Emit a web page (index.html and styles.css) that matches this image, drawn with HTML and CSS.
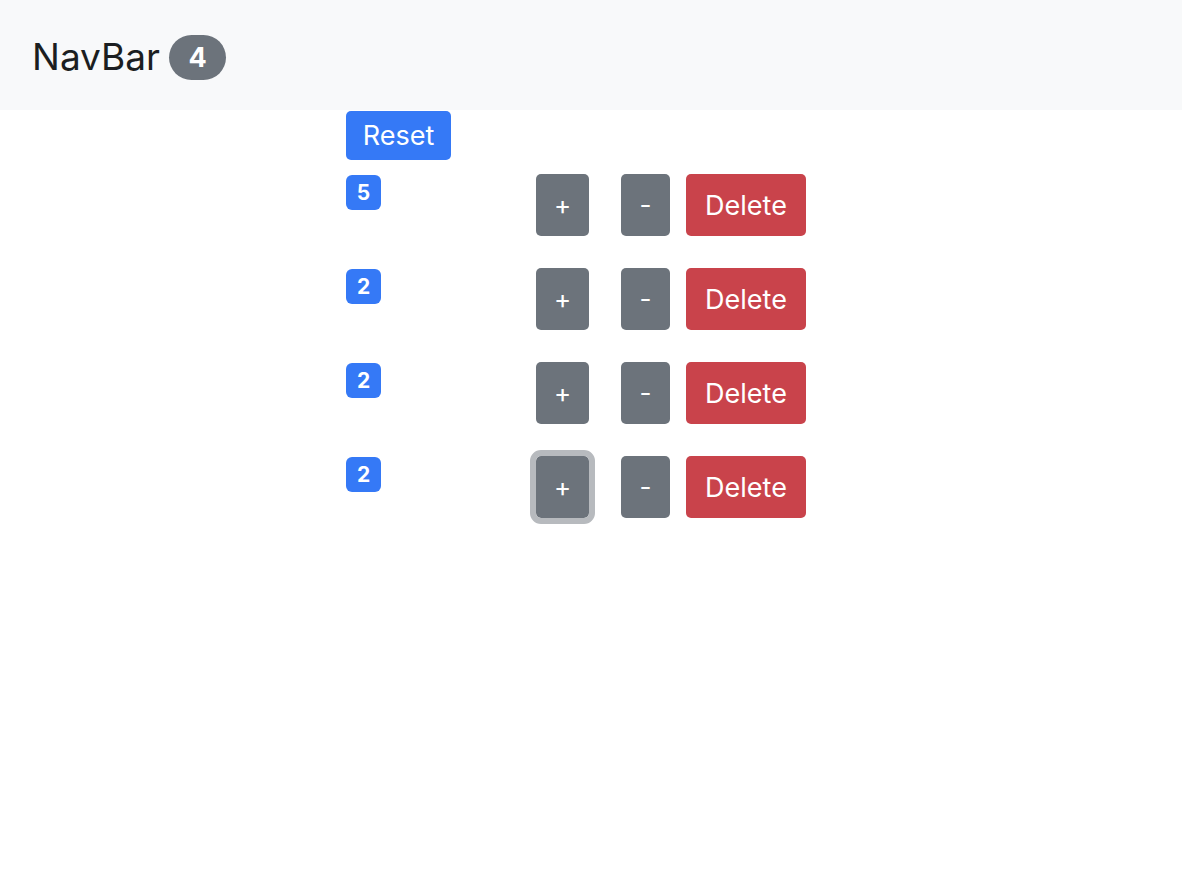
FILE: index.html
```html
<!DOCTYPE html>
<html lang="en">
<head>
<meta charset="utf-8">
<title>Counters</title>
<link rel="stylesheet" href="styles.css">
</head>
<body>
<nav class="navbar">
  <span class="brand">NavBar</span>
  <span class="pill">4</span>
</nav>
<main class="main">
  <button class="btn btn-reset">Reset</button>
  <div class="counters">
    <div class="counter">
      <div class="count-col"><span class="badge">5</span></div>
      <button class="btn btn-gray btn-plus">+</button>
      <button class="btn btn-gray btn-minus">-</button>
      <button class="btn btn-danger">Delete</button>
    </div>
    <div class="counter">
      <div class="count-col"><span class="badge">2</span></div>
      <button class="btn btn-gray btn-plus">+</button>
      <button class="btn btn-gray btn-minus">-</button>
      <button class="btn btn-danger">Delete</button>
    </div>
    <div class="counter">
      <div class="count-col"><span class="badge">2</span></div>
      <button class="btn btn-gray btn-plus">+</button>
      <button class="btn btn-gray btn-minus">-</button>
      <button class="btn btn-danger">Delete</button>
    </div>
    <div class="counter">
      <div class="count-col"><span class="badge">2</span></div>
      <button class="btn btn-gray btn-plus is-focused">+</button>
      <button class="btn btn-gray btn-minus">-</button>
      <button class="btn btn-danger">Delete</button>
    </div>
  </div>
</main>
</body>
</html>
```

FILE: styles.css
```css
* { box-sizing: border-box; }
html, body {
  margin: 0;
  padding: 0;
  background: #ffffff;
  font-family: Inter, "Noto Sans", "Liberation Sans", sans-serif;
  color: #212529;
}
.navbar {
  height: 110px;
  background: #f8f9fa;
  display: flex;
  align-items: center;
  padding-left: 32px;
}
.brand {
  font-size: 37px;
  font-weight: 400;
  color: #1b1e21;
  line-height: 1;
  margin-top: 2px;
}
.pill {
  margin-left: 9px;
  width: 57px;
  height: 45px;
  border-radius: 23px;
  background: #6c737b;
  color: #fff;
  font-weight: 700;
  font-size: 27px;
  display: flex;
  align-items: center;
  justify-content: center;
  margin-top: 4px;
}
.main {
  padding-left: 346px;
  padding-top: 1px;
  padding-bottom: 40px;
}
.btn {
  border: none;
  color: #fff;
  font-family: inherit;
  font-size: 27px;
  border-radius: 5px;
  display: flex;
  align-items: center;
  justify-content: center;
  padding: 0;
  cursor: pointer;
}
.btn-reset {
  width: 105px;
  height: 49px;
  background: #3579f6;
}
.counters {
  display: flex;
  flex-direction: column;
  gap: 32px;
  margin-top: 14px;
}
.counter {
  display: flex;
  align-items: flex-start;
}
.count-col {
  width: 190px;
  padding-top: 1px;
}
.badge {
  display: flex;
  width: 35px;
  height: 35px;
  border-radius: 6px;
  background: #3579f6;
  color: #fff;
  font-weight: 700;
  font-size: 21px;
  align-items: center;
  justify-content: center;
}
.btn-gray {
  background: #6c737b;
  height: 62px;
  font-size: 26px;
  padding-bottom: 2px;
}
.btn-plus { width: 53px; }
.btn-minus { width: 49px; margin-left: 32px; }
.btn-danger {
  background: #c9434b;
  width: 120px;
  height: 62px;
  margin-left: 16px;
}
.is-focused {
  outline: 6px solid #b7babe;
  outline-offset: 0;
}
```
